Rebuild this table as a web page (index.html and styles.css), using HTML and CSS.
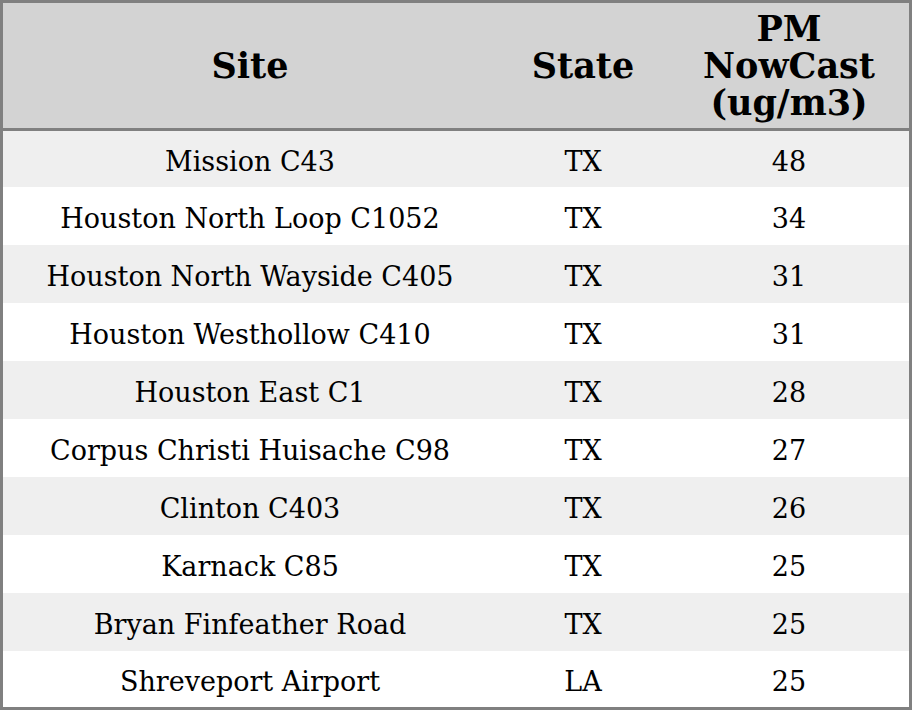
FILE: index.html
```html
<!DOCTYPE html>
<html>
<head>
<meta charset="utf-8">
<link rel="stylesheet" href="styles.css">
</head>
<body>
<table class="tbl">
  <thead>
    <tr>
      <th class="c-site">Site</th>
      <th class="c-state">State</th>
      <th class="c-pm">PM<br>NowCast<br>(ug/m3)</th>
    </tr>
  </thead>
  <tbody>
    <tr><td>Mission C43</td><td>TX</td><td>48</td></tr>
    <tr><td>Houston North Loop C1052</td><td>TX</td><td>34</td></tr>
    <tr><td>Houston North Wayside C405</td><td>TX</td><td>31</td></tr>
    <tr><td>Houston Westhollow C410</td><td>TX</td><td>31</td></tr>
    <tr><td>Houston East C1</td><td>TX</td><td>28</td></tr>
    <tr><td>Corpus Christi Huisache C98</td><td>TX</td><td>27</td></tr>
    <tr><td>Clinton C403</td><td>TX</td><td>26</td></tr>
    <tr><td>Karnack C85</td><td>TX</td><td>25</td></tr>
    <tr><td>Bryan Finfeather Road</td><td>TX</td><td>25</td></tr>
    <tr><td>Shreveport Airport</td><td>LA</td><td>25</td></tr>
  </tbody>
</table>
</body>
</html>
```
FILE: styles.css
```css
html, body {
  margin: 0;
  padding: 0;
  background: #ffffff;
}
.tbl {
  width: 912px;
  border-collapse: collapse;
  border: 3px solid #808080;
  font-family: "DejaVu Serif", serif;
  color: #000;
  table-layout: fixed;
}
.tbl th {
  background: #d3d3d3;
  font-size: 35px;
  font-weight: bold;
  line-height: 37px;
  height: 125px;
  padding: 0;
  text-align: center;
  vertical-align: middle;
  border-bottom: 3px solid #808080;
}
.c-site { width: 494px; }
.c-state { width: 172px; }
.tbl td {
  font-size: 27px;
  height: 54px;
  padding: 4px 0 0 0;
  text-align: center;
  vertical-align: middle;
}
.tbl tbody tr:first-child td,
.tbl tbody tr:last-child td {
  height: 52px;
}
.tbl tbody tr:nth-child(odd) td {
  background: #efefef;
}
```
